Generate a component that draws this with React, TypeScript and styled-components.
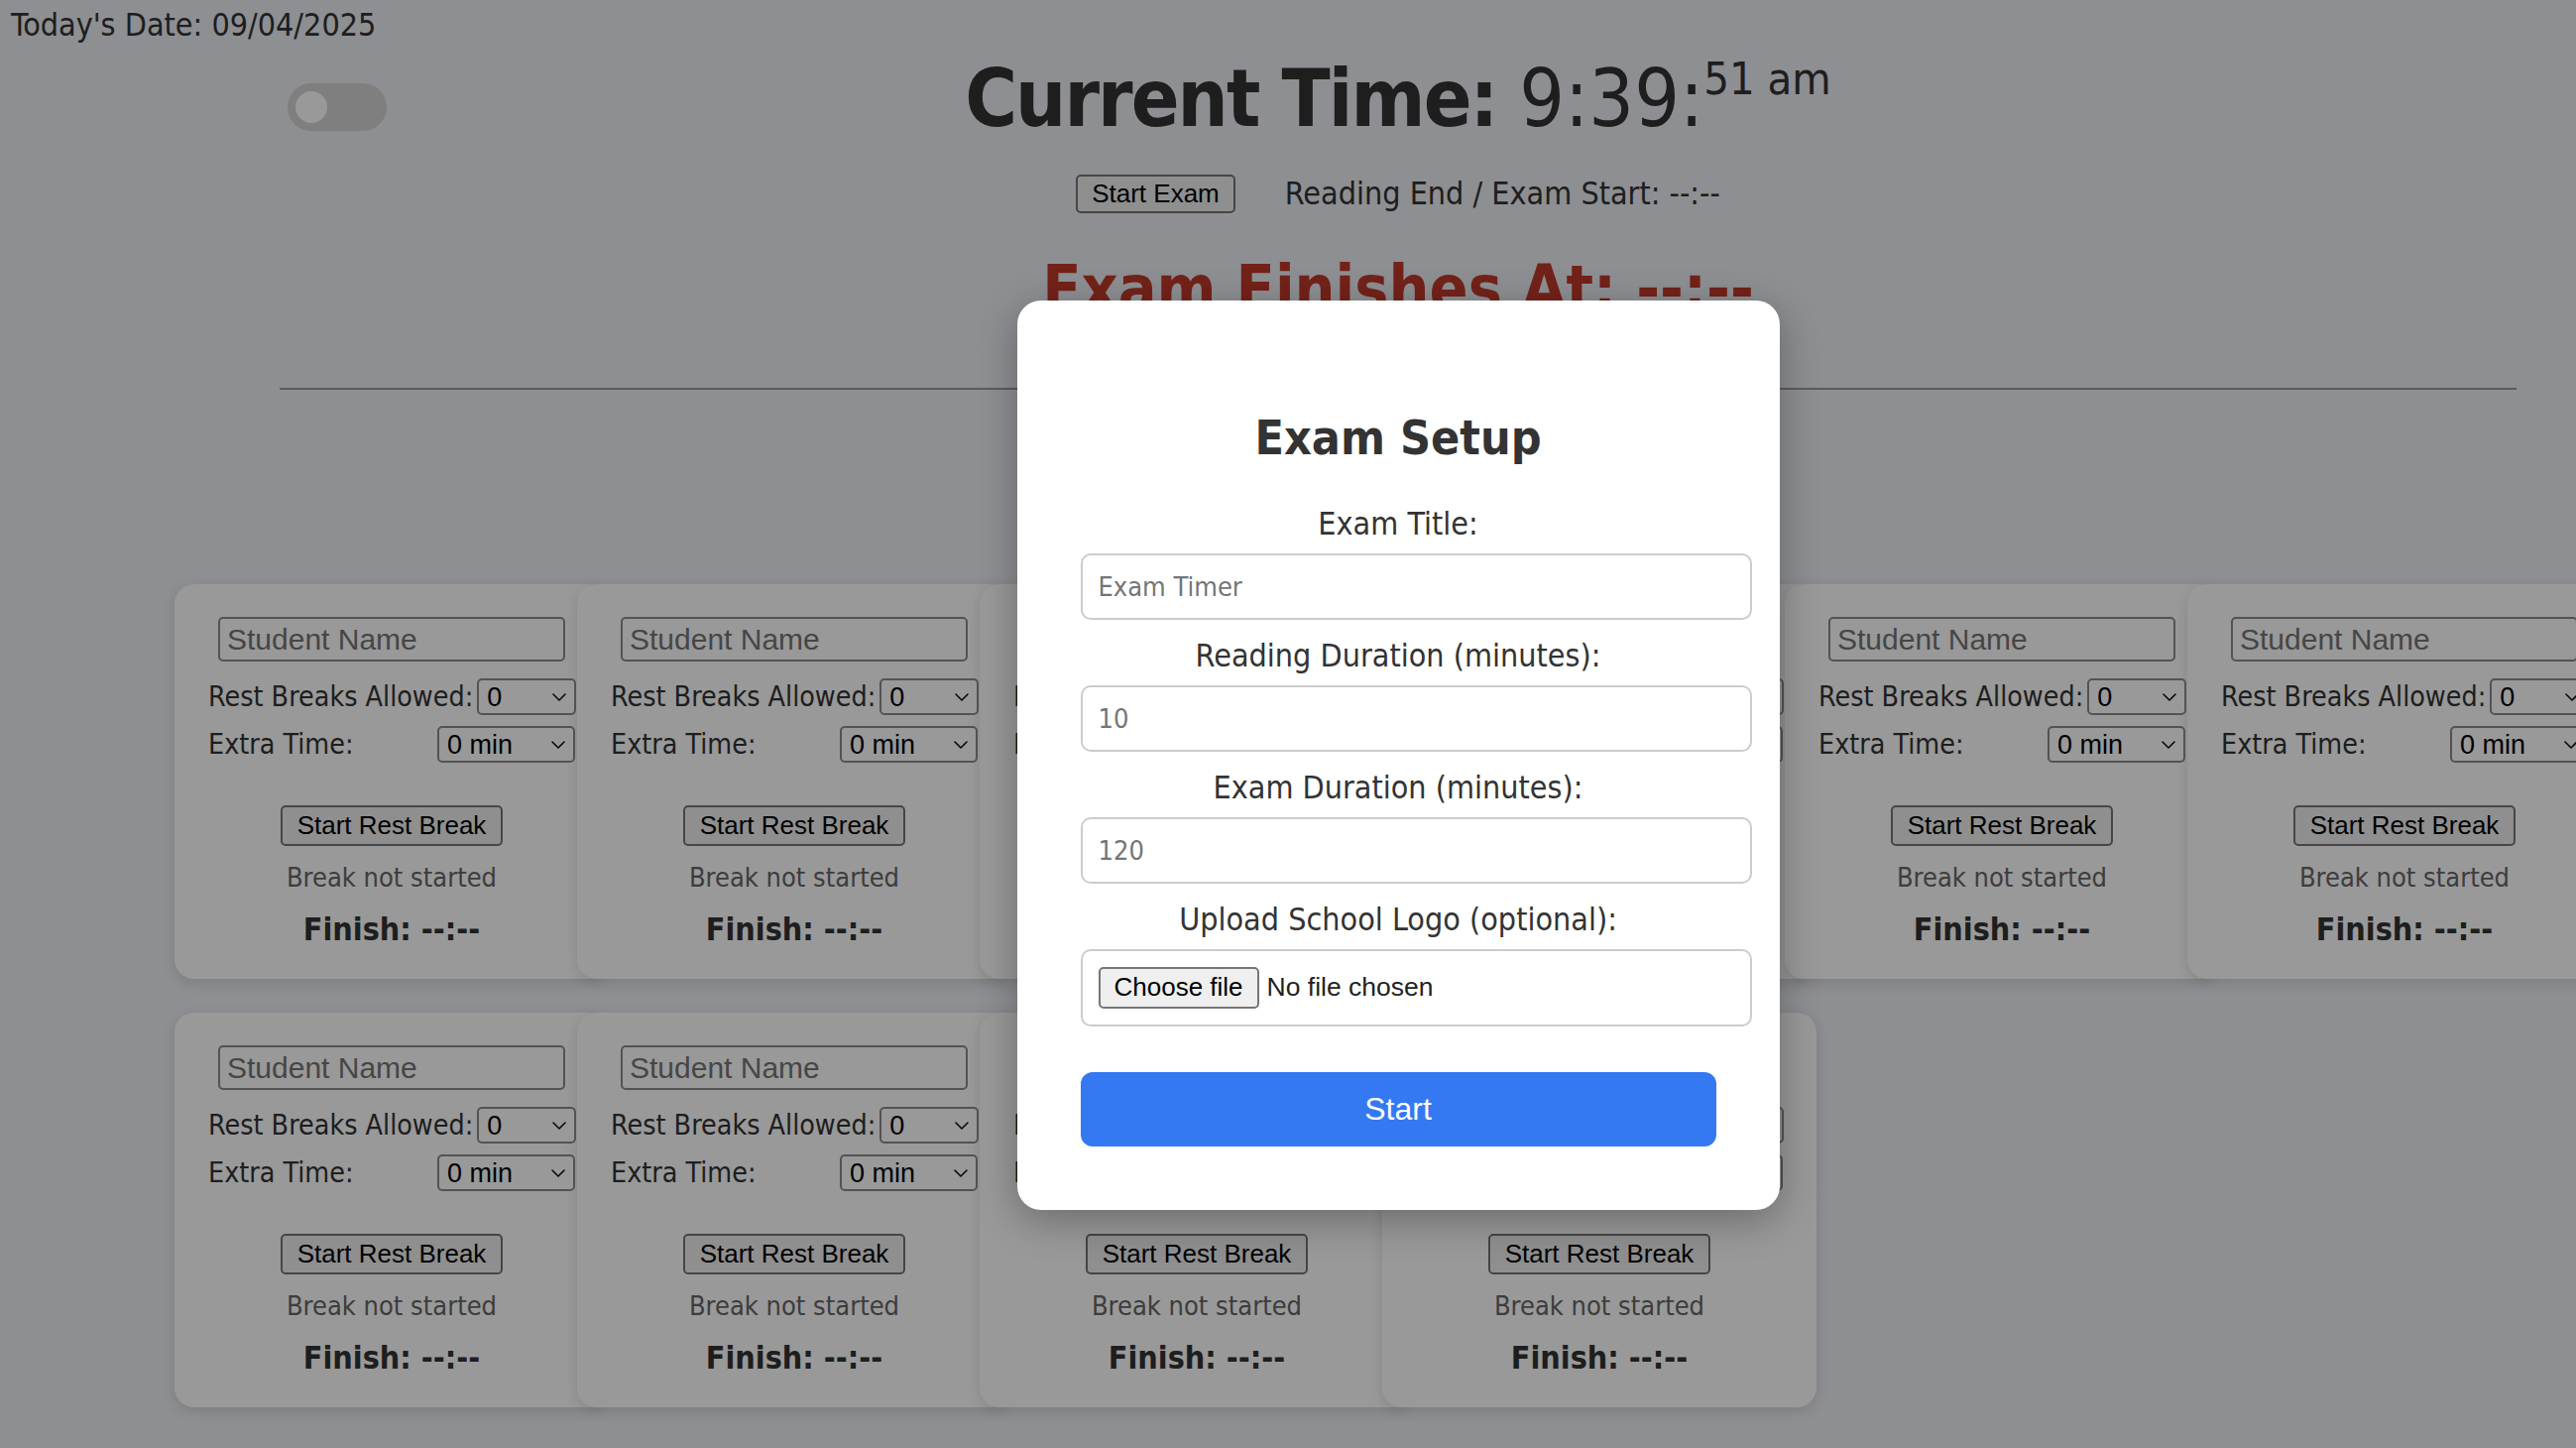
import React from "react";
import styled, { createGlobalStyle } from "styled-components";

const TEXT_FONT = `"DejaVu Sans Condensed", "DejaVu Sans", Tahoma, sans-serif`;
const UI_FONT = `"Liberation Sans", Arial, Helvetica, sans-serif`;

const GlobalStyle = createGlobalStyle`
  *, *::before, *::after { box-sizing: border-box; }
  html, body { margin: 0; padding: 0; overflow: hidden; background: #eceef4; }
  body { font-family: ${TEXT_FONT}; color: #333; }
  #root { width: 2820px; }
`;

const Page = styled.div`
  position: relative;
  width: 2820px;
  min-height: 1522px;
  background: #eceef4;
`;

const DateLine = styled.div`
  height: 44px;
  padding: 6px 11px 0;
  font-size: 32px;
  line-height: 38px;
  color: #333;
`;

const Header = styled.header`
  padding: 9px 282px 0;
`;

const TopRow = styled.div`
  display: grid;
  grid-template-columns: 1fr auto 1fr;
  align-items: start;
`;

const Toggle = styled.button`
  display: flex;
  align-items: center;
  justify-self: start;
  width: 100px;
  height: 48px;
  margin: 31px 0 0 8px;
  padding: 0 8px;
  border: none;
  border-radius: 24px;
  background: #d4d4d4;
  cursor: pointer;
`;

const Knob = styled.span`
  width: 32px;
  height: 32px;
  border-radius: 50%;
  background: #ffffff;
`;

const Clock = styled.h1`
  margin: 0;
  font-size: 80px;
  line-height: 93px;
  font-weight: normal;
  white-space: nowrap;
  color: #333;
`;

const ClockLabel = styled.strong`
  font-weight: bold;
  letter-spacing: -1.9px;
`;

const Seconds = styled.sup`
  font-size: 45px;
  line-height: 1;
  vertical-align: 32px;
`;

const Controls = styled.div`
  display: flex;
  justify-content: center;
  align-items: center;
  gap: 50px;
  height: 39px;
  margin-top: 30px;
`;

const NativeButton = styled.button<{ $h: number; $size: number }>`
  display: inline-flex;
  align-items: center;
  justify-content: center;
  flex: none;
  height: ${(p) => p.$h}px;
  padding: 0 14px;
  border: 2px solid #767676;
  border-radius: 5px;
  background: #efefef;
  color: #000;
  font-family: ${UI_FONT};
  font-size: ${(p) => p.$size}px;
  white-space: nowrap;
  cursor: pointer;
`;

const ReadingInfo = styled.span`
  font-size: 32px;
  line-height: 37px;
  color: #333;
  white-space: nowrap;
`;

const FinishTitle = styled.h2`
  margin: 39px 0 0;
  font-size: 64px;
  line-height: 75px;
  font-weight: bold;
  color: #c0392b;
  text-align: center;
  white-space: nowrap;
`;

const Divider = styled.hr`
  height: 2px;
  margin: 62px 0 0;
  border: none;
  background: #999;
`;

const CardGrid = styled.section`
  display: grid;
  grid-template-columns: repeat(6, 406px);
  row-gap: 34px;
  width: 2468px;
  margin: 196px auto 0;
`;

const Card = styled.div`
  display: flex;
  flex-direction: column;
  align-items: center;
  width: 438px;
  height: 398px;
  padding: 33px 34px 0;
  background: #ffffff;
  border-radius: 20px;
  box-shadow: 0 4px 14px rgba(0, 0, 0, 0.12);
`;

const NameInput = styled.input`
  width: 350px;
  height: 45px;
  padding: 0 7px;
  border: 2px solid #8a8a8a;
  border-radius: 5px;
  font-family: ${UI_FONT};
  font-size: 30px;
  color: #000;
  background: #fff;
  &::placeholder {
    color: #757575;
  }
`;

const FieldRow = styled.div<{ $first?: boolean }>`
  display: flex;
  justify-content: space-between;
  align-items: center;
  gap: 4px;
  width: 100%;
  height: 37px;
  margin-top: ${(p) => (p.$first ? 17 : 11)}px;
`;

const FieldLabel = styled.label`
  font-size: 28.4px;
  line-height: 37px;
  color: #333;
  white-space: nowrap;
`;

const SelectWrap = styled.div<{ $w: number }>`
  position: relative;
  flex: none;
  width: ${(p) => p.$w}px;
  height: 37px;
`;

const Select = styled.select`
  width: 100%;
  height: 100%;
  padding: 0 30px 0 8px;
  border: 2px solid #8a8a8a;
  border-radius: 5px;
  background: #fff;
  color: #000;
  font-family: ${UI_FONT};
  font-size: 27px;
  appearance: none;
  -webkit-appearance: none;
`;

const ChevronIcon = styled.svg`
  position: absolute;
  right: 9px;
  top: 14px;
  pointer-events: none;
`;

const BreakButton = styled(NativeButton)`
  margin-top: 43px;
  padding: 0 15px;
`;

const BreakStatus = styled.div`
  margin-top: 16px;
  font-size: 27px;
  line-height: 31px;
  color: #666;
`;

const FinishLine = styled.div`
  margin-top: 19px;
  font-size: 32px;
  line-height: 37px;
  font-weight: bold;
  color: #333;
`;

const Overlay = styled.div`
  position: absolute;
  inset: 0;
  display: flex;
  align-items: center;
  justify-content: center;
  background: rgba(0, 0, 0, 0.4);
`;

const Modal = styled.div`
  width: 769px;
  padding: 64px;
  background: #fff;
  border-radius: 24px;
  box-shadow: 0 10px 40px rgba(0, 0, 0, 0.3);
`;

const ModalTitle = styled.h2`
  margin: 44px 0 39px;
  font-size: 48px;
  line-height: 60px;
  font-weight: bold;
  text-align: center;
  color: #333;
`;

const ModalLabel = styled.label`
  display: block;
  margin-bottom: 12px;
  font-size: 32px;
  line-height: 36px;
  text-align: center;
  color: #333;
`;

const ModalInput = styled.input`
  display: block;
  box-sizing: content-box;
  width: 100%;
  height: 31px;
  margin: 0 0 18px;
  padding: 16px;
  border: 2px solid #ccc;
  border-radius: 10px;
  font-family: ${TEXT_FONT};
  font-size: 27px;
  color: #333;
  &::placeholder {
    color: #757575;
  }
`;

const FileBox = styled.div`
  display: flex;
  align-items: center;
  gap: 8px;
  box-sizing: content-box;
  width: 100%;
  height: 42px;
  margin-bottom: 46px;
  padding: 16px;
  border: 2px solid #ccc;
  border-radius: 10px;
`;

const HiddenFile = styled.input`
  display: none;
`;

const FileName = styled.span`
  font-family: ${UI_FONT};
  font-size: 26.5px;
  color: #222;
`;

const StartButton = styled.button`
  display: block;
  width: 100%;
  height: 75px;
  border: none;
  border-radius: 12px;
  background: #3479f2;
  color: #fff;
  font-family: ${UI_FONT};
  font-size: 32px;
  cursor: pointer;
`;

const Chevron = () => (
  <ChevronIcon width="16" height="10" viewBox="0 0 16 10" aria-hidden="true">
    <path d="M2 2 L8 8 L14 2" fill="none" stroke="#111" strokeWidth="1.6" strokeLinecap="round" strokeLinejoin="round" />
  </ChevronIcon>
);

const StudentCard = ({ index }: { index: number }) => (
  <Card>
    <NameInput placeholder="Student Name" aria-label={`Student ${index + 1} name`} />
    <FieldRow $first>
      <FieldLabel>Rest Breaks Allowed:</FieldLabel>
      <SelectWrap $w={100}>
        <Select defaultValue="0">
          <option value="0">0</option>
          <option value="1">1</option>
          <option value="2">2</option>
          <option value="3">3</option>
        </Select>
        <Chevron />
      </SelectWrap>
    </FieldRow>
    <FieldRow>
      <FieldLabel>Extra Time:</FieldLabel>
      <SelectWrap $w={139}>
        <Select defaultValue="0">
          <option value="0">0 min</option>
          <option value="5">5 min</option>
          <option value="10">10 min</option>
          <option value="15">15 min</option>
          <option value="30">30 min</option>
        </Select>
        <Chevron />
      </SelectWrap>
    </FieldRow>
    <BreakButton $h={41} $size={26}>Start Rest Break</BreakButton>
    <BreakStatus>Break not started</BreakStatus>
    <FinishLine>Finish: --:--</FinishLine>
  </Card>
);

export default function App() {
  const students = Array.from({ length: 10 }, (_, i) => i);
  return (
    <>
      <GlobalStyle />
      <Page>
        <DateLine>Today's Date: 09/04/2025</DateLine>
        <Header>
          <TopRow>
            <Toggle aria-label="Toggle theme">
              <Knob />
            </Toggle>
            <Clock>
              <ClockLabel>Current Time:</ClockLabel> 9:39:<Seconds>51 am</Seconds>
            </Clock>
            <span />
          </TopRow>
          <Controls>
            <NativeButton $h={39} $size={26}>Start Exam</NativeButton>
            <ReadingInfo>Reading End / Exam Start: --:--</ReadingInfo>
          </Controls>
          <FinishTitle>Exam Finishes At: --:--</FinishTitle>
          <Divider />
        </Header>
        <CardGrid>
          {students.map((i) => (
            <StudentCard key={i} index={i} />
          ))}
        </CardGrid>
        <Overlay>
          <Modal>
            <ModalTitle>Exam Setup</ModalTitle>
            <ModalLabel htmlFor="exam-title">Exam Title:</ModalLabel>
            <ModalInput id="exam-title" type="text" placeholder="Exam Timer" />
            <ModalLabel htmlFor="reading-duration">Reading Duration (minutes):</ModalLabel>
            <ModalInput id="reading-duration" type="number" placeholder="10" />
            <ModalLabel htmlFor="exam-duration">Exam Duration (minutes):</ModalLabel>
            <ModalInput id="exam-duration" type="number" placeholder="120" />
            <ModalLabel htmlFor="school-logo">Upload School Logo (optional):</ModalLabel>
            <FileBox>
              <NativeButton as="label" htmlFor="school-logo" $h={42} $size={26}>
                Choose file
              </NativeButton>
              <HiddenFile id="school-logo" type="file" accept="image/*" />
              <FileName>No file chosen</FileName>
            </FileBox>
            <StartButton>Start</StartButton>
          </Modal>
        </Overlay>
      </Page>
    </>
  );
}
